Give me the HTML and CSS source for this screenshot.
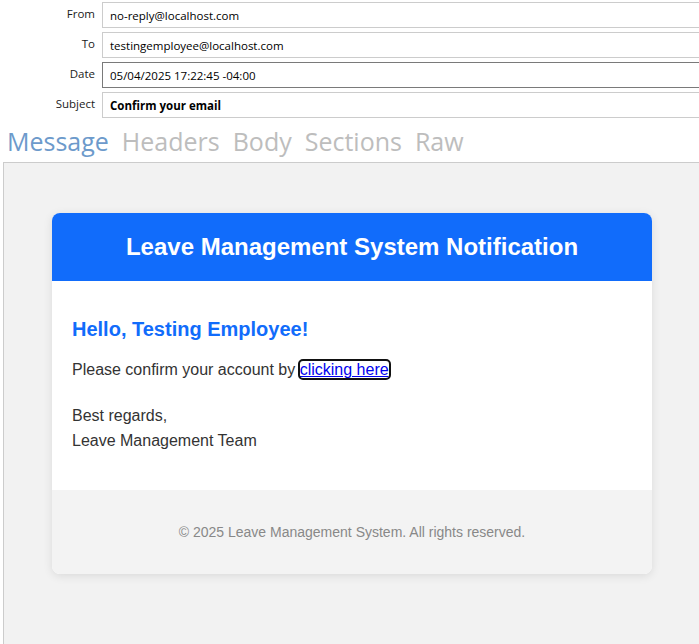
FILE: index.html
```html
<!DOCTYPE html>
<html>
<head>
<meta charset="utf-8">
<link rel="stylesheet" href="styles.css">
</head>
<body>
<div class="app">
  <div class="fields">
    <div class="row"><span class="label">From</span><div class="field">no-reply@localhost.com</div></div>
    <div class="row"><span class="label">To</span><div class="field">testingemployee@localhost.com</div></div>
    <div class="row"><span class="label">Date</span><div class="field focused">05/04/2025 17:22:45 -04:00</div></div>
    <div class="row"><span class="label">Subject</span><div class="field bold">Confirm your email</div></div>
  </div>
  <div class="tabs">
    <span class="tab active">Message</span>
    <span class="tab">Headers</span>
    <span class="tab">Body</span>
    <span class="tab">Sections</span>
    <span class="tab">Raw</span>
  </div>
  <div class="panel">
    <div class="card">
      <div class="card-header">Leave Management System Notification</div>
      <div class="card-body">
        <h2 class="hello">Hello, Testing Employee!</h2>
        <p class="p1">Please confirm your account by <a href="#" class="link">clicking here</a></p>
        <p class="p2">Best regards,<br>Leave Management Team</p>
      </div>
      <div class="card-footer">© 2025 Leave Management System. All rights reserved.</div>
    </div>
  </div>
</div>
</body>
</html>
```
FILE: styles.css
```css
html, body {
  margin: 0;
  padding: 0;
  overflow: hidden;
  background: #ffffff;
}
.app {
  display: flex;
  flex-direction: column;
  height: 644px;
  width: 720px;
}
.fields {
  display: flex;
  flex-direction: column;
  gap: 4px;
  padding-top: 2px;
}
.row {
  display: flex;
  align-items: flex-start;
  height: 26px;
}
.label {
  width: 96px;
  box-sizing: border-box;
  padding-right: 1px;
  text-align: right;
  font-family: "Open Sans", "Noto Sans", sans-serif;
  font-size: 11.5px;
  line-height: 24px;
  color: #1a1a1a;
}
.field {
  margin-left: 6px;
  flex: 1;
  height: 26px;
  box-sizing: border-box;
  border: 1px solid #cccccc;
  padding: 0 7px;
  font-family: "Open Sans", "Noto Sans", sans-serif;
  font-size: 11.5px;
  line-height: 25px;
  color: #000;
}
.field.focused {
  border-color: #7a7a7a;
}
.field.bold {
  font-weight: 700;
}
.tabs {
  display: flex;
  gap: 13px;
  padding-left: 7px;
  padding-top: 2px;
  height: 41px;
  margin-top: 1px;
  font-family: "Open Sans", "Noto Sans", sans-serif;
  font-size: 25px;
  line-height: 40px;
  color: #bdbdbd;
}
.tab.active {
  color: #6d9acb;
}
.panel {
  flex: 1;
  margin-left: 3px;
  border-top: 1px solid #cccccc;
  border-left: 1px solid #cccccc;
  background: #f2f2f2;
  padding: 50px 0 0 48px;
}
.card {
  width: 600px;
  border-radius: 8px;
  background: #ffffff;
  overflow: hidden;
  box-shadow: 0 2px 10px rgba(0, 0, 0, 0.1);
  font-family: "Liberation Sans", Arial, sans-serif;
}
.card-header {
  background: #116cfb;
  color: #ffffff;
  text-align: center;
  font-weight: 700;
  font-size: 24px;
  line-height: 28px;
  padding: 20px;
}
.card-body {
  padding: 37px 20px 37px;
  color: #333333;
  font-size: 16px;
}
.hello {
  margin: 0 0 16px;
  color: #116cfb;
  font-size: 20px;
  line-height: 23px;
  font-weight: 700;
}
.card-body p {
  margin: 0;
  line-height: 25px;
}
.card-body .p1 {
  margin-bottom: 21px;
}
.link {
  color: #0000ee;
  text-decoration: underline;
  outline: 2px solid #111111;
  border-radius: 3px;
}
.card-footer {
  background: #f3f3f3;
  text-align: center;
  color: #888888;
  font-size: 14px;
  line-height: 22px;
  padding: 31px 20px;
}
```
